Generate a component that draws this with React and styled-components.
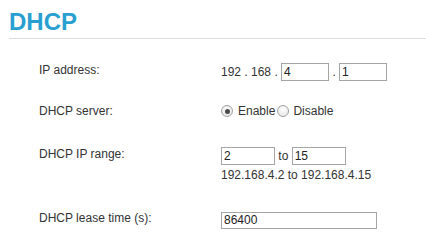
import React, { useState } from "react";
import styled, { createGlobalStyle } from "styled-components";

const Global = createGlobalStyle`
  body {
    margin: 0;
    background: #fff;
    font-family: "Liberation Sans", Arial, sans-serif;
    color: #333;
  }
`;

const Page = styled.div`
  width: 426px;
  height: 252px;
  overflow: hidden;
`;

const Title = styled.h1`
  margin: 8px 0 0 9px;
  padding: 0 0 2px 0;
  height: 28px;
  line-height: 28px;
  font-size: 24px;
  font-weight: bold;
  color: #299fd1;
  border-bottom: 1px solid #dcdcdc;
`;

const Form = styled.div`
  display: flex;
  flex-direction: column;
  padding-left: 39px;
`;

const Row = styled.div`
  display: flex;
  align-items: flex-start;
  margin-top: ${(p) => p.$top}px;
`;

const Label = styled.div`
  width: 182px;
  flex: none;
  font-size: 12px;
  line-height: 14px;
`;

const Value = styled.div`
  display: flex;
  flex-direction: column;
  font-size: 12px;
`;

const Line = styled.div`
  display: flex;
  align-items: center;
  height: ${(p) => p.$h || 18}px;
  white-space: pre;
`;

const Note = styled.div`
  margin-top: 3px;
  line-height: 14px;
`;

const Box = styled.input`
  box-sizing: border-box;
  width: ${(p) => p.$w}px;
  height: ${(p) => p.$h || 18}px;
  margin: 0;
  padding: 0 2px;
  border: 1px solid #a5a5a5;
  font-family: "Liberation Sans", Arial, sans-serif;
  font-size: 12px;
  color: #222;
  background: #fff;
  outline: none;
`;

const Radio = styled.input`
  appearance: none;
  box-sizing: border-box;
  width: 12px;
  height: 12px;
  margin: 0 ${(p) => p.$gap}px 0 0;
  border-radius: 50%;
  border: 1px solid #a0a0a0;
  background: radial-gradient(circle at 50% 35%, #fdfdfd, #e4e4e4);
  position: relative;
  &:checked::after {
    content: "";
    position: absolute;
    left: 2.5px;
    top: 2.5px;
    width: 5px;
    height: 5px;
    border-radius: 50%;
    background: #4a4a4a;
  }
`;

const Opt = styled.span`
  margin-right: ${(p) => p.$mr || 0}px;
`;

export default function App() {
  const [mode, setMode] = useState("enable");
  return (
    <Page>
      <Global />
      <Title>DHCP</Title>
      <Form>
        <Row $top={24}>
          <Label>IP address:</Label>
          <Value>
            <Line>
              {"192 . 168 . "}
              <Box $w={48} defaultValue="4" />
              {" . "}
              <Box $w={48} defaultValue="1" />
            </Line>
          </Value>
        </Row>
        <Row $top={23}>
          <Label>DHCP server:</Label>
          <Value>
            <Line $h={14}>
              <Radio type="radio" $gap={5} checked={mode === "enable"} onChange={() => setMode("enable")} />
              <Opt $mr={2}>Enable</Opt>
              <Radio type="radio" $gap={4} checked={mode === "disable"} onChange={() => setMode("disable")} />
              <Opt>Disable</Opt>
            </Line>
          </Value>
        </Row>
        <Row $top={29}>
          <Label>DHCP IP range:</Label>
          <Value>
            <Line>
              <Box $w={54} defaultValue="2" />
              {" to "}
              <Box $w={54} defaultValue="15" />
            </Line>
            <Note>192.168.4.2 to 192.168.4.15</Note>
          </Value>
        </Row>
        <Row $top={29}>
          <Label>DHCP lease time (s):</Label>
          <Value>
            <Line>
              <Box $w={156} $h={17} defaultValue="86400" />
            </Line>
          </Value>
        </Row>
      </Form>
    </Page>
  );
}
